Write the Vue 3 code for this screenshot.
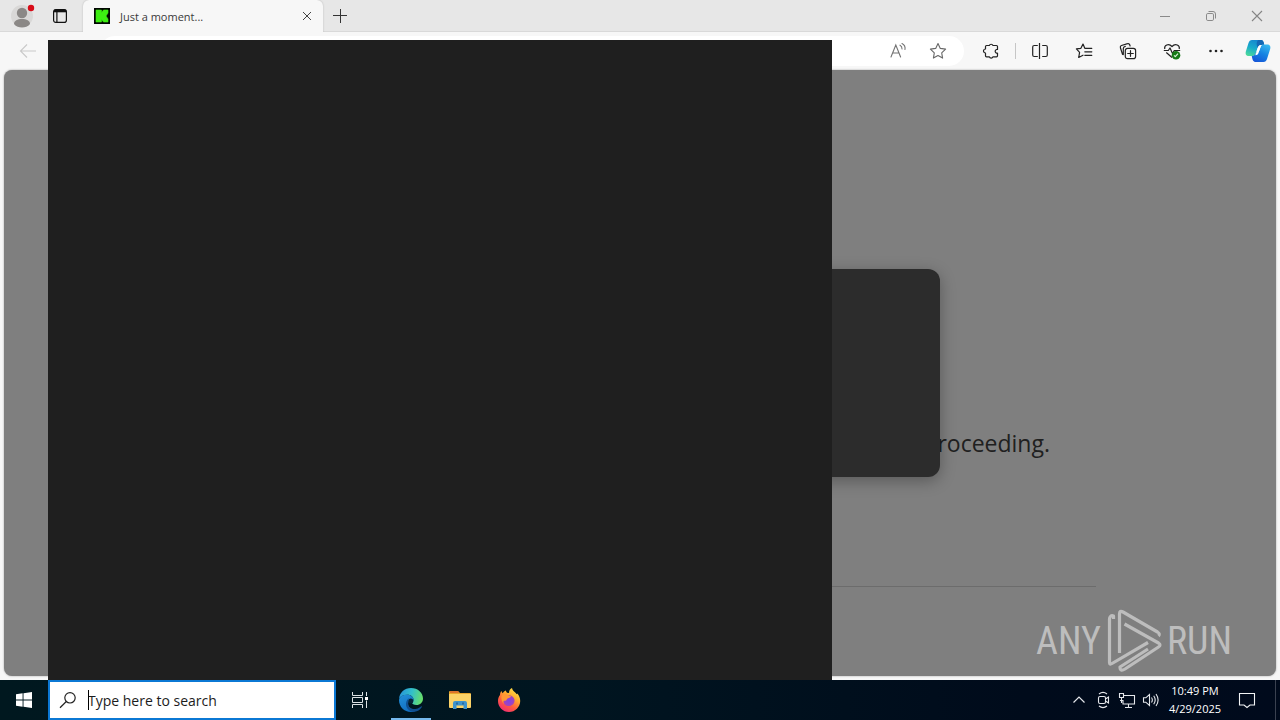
<script setup>
import { ref } from 'vue'

const address = ref('')
const query = ref('')
</script>

<template>
  <div class="desktop">
    <section class="browser">
      <header class="titlebar">
        <button class="profile" aria-label="Profile">
          <svg width="28" height="28" viewBox="0 0 28 28">
            <circle cx="14" cy="14" r="11" fill="#d9d8d7" />
            <circle cx="14" cy="11" r="5.2" fill="#8b8886" />
            <path d="M6 22c0-3.200 3.500-5 8-5s8 1.800 8 5c-2 2.600-5 3.400-8 3.400S8 24.600 6 22z" fill="#8b8886" />
            <circle cx="23" cy="6" r="3.200" fill="#d80c18" />
          </svg>
        </button>
        <button class="workspaces" aria-label="Tab actions">
          <svg width="16" height="16" viewBox="0 0 16 16" fill="none" stroke="#111">
            <rect x="1.600" y="1.600" width="12.800" height="12.800" rx="2.200" stroke-width="1.200" />
            <path d="M2 3.200h12M4.900 4v10" stroke-width="1.200" />
            <path d="M2 3h12" stroke-width="2.600" />
          </svg>
        </button>
        <div class="tab">
          <svg class="favicon" width="16" height="16" viewBox="0 0 16 16">
            <rect width="16" height="16" fill="#020702" />
            <path d="M2 2h5.500v2.500L9.500 2H14v3l-2 3 2 3v3H9.500l-2-2.500V14H2z" fill="#3dee12" stroke="#3dee12" stroke-width="0.600" stroke-linejoin="round" />
          </svg>
          <span class="tab-title">Just a moment...</span>
          <button class="tab-close" aria-label="Close tab">
            <svg width="10" height="10" viewBox="0 0 10 10" fill="none" stroke="#444"><path d="M1 1l8 8M9 1L1 9" /></svg>
          </button>
        </div>
        <button class="new-tab" aria-label="New tab">
          <svg width="14" height="14" viewBox="0 0 14 14" fill="none" stroke="#333"><path d="M7.500 0v14M0 6.500h14" /></svg>
        </button>
        <div class="window-controls">
          <button aria-label="Minimize">
            <svg width="12" height="12" viewBox="0 0 12 12" fill="none" stroke="#8a8a8a"><path d="M1 6.500h10" /></svg>
          </button>
          <button aria-label="Restore">
            <svg width="12" height="12" viewBox="0 0 12 12" fill="none" stroke="#8a8a8a"><rect x="1.500" y="3.500" width="7" height="7" rx="1.300" /><path d="M3.500 1.500H8a2.500 2.500 0 0 1 2.500 2.500v4.500" /></svg>
          </button>
          <button aria-label="Close">
            <svg width="12" height="12" viewBox="0 0 12 12" fill="none" stroke="#858585" stroke-width="1.100"><path d="M1 1l10 10M11 1L1 11" /></svg>
          </button>
        </div>
      </header>

      <nav class="toolbar">
        <button class="back" aria-label="Back">
          <svg width="18" height="16" viewBox="0 0 18 16" fill="none" stroke="#c9c9c9" stroke-width="1.100"><path d="M17 8H2M8 1.500L1.500 8 8 14.500" /></svg>
        </button>
        <div class="address">
          <input v-model="address" aria-label="Address" type="text">
          <button aria-label="Read aloud">
            <svg width="18" height="18" viewBox="0 0 18 18" fill="none" stroke="#737373" stroke-width="1.100" stroke-linecap="round"><path d="M2 15L6.800 3l4.800 12M3.700 11h6.200M11 3.200c1.500.8 2.100 2 2 3.700M13 1.500c2.500 1.200 3.400 3.300 3 6" /></svg>
          </button>
          <button aria-label="Add to favorites">
            <svg width="18" height="18" viewBox="0 0 18 18" fill="none" stroke="#686868" stroke-width="1.100" stroke-linejoin="round"><path d="M9 1.500l2.300 4.900 5.300.7-3.900 3.700.9 5.300L9 13.600l-4.600 2.500.9-5.300-3.900-3.700 5.300-.7z" /></svg>
          </button>
        </div>
        <button class="tool" aria-label="Extensions">
          <svg width="18" height="18" viewBox="0 0 18 18" fill="none" stroke="#222" stroke-width="1.200" stroke-linejoin="round"><path d="M4.500 3.500h2.800a2 2 0 0 1 3.700 0h3.500q1 0 1 1v3a1.900 1.900 0 1 0 0 3.700v2.600q0 1-1 1H11a2 2 0 0 1-3.700 0H4.500q-1 0-1-1V11a2 2 0 0 1 0-4V4.500q0-1 1-1z" /></svg>
        </button>
        <span class="divider"></span>
        <button class="tool" aria-label="Split screen">
          <svg width="18" height="18" viewBox="0 0 18 18" fill="none" stroke="#222" stroke-width="1.200"><path d="M6.800 3.500H3.200a1.500 1.500 0 0 0-1.500 1.500v8a1.500 1.500 0 0 0 1.500 1.500h3.600M11.200 3.500h3.600a1.500 1.500 0 0 1 1.500 1.500v8a1.500 1.500 0 0 1-1.500 1.500h-3.600M8.500 1v16" /></svg>
        </button>
        <button class="tool" aria-label="Favorites">
          <svg width="18" height="18" viewBox="0 0 18 18" fill="none" stroke="#222" stroke-width="1.200" stroke-linecap="round" stroke-linejoin="round"><path d="M11.200 6.300H9.800L8 2 5.900 6.300l-4.500.6 3.200 3.400-.9 5.200L8 13.200M11.500 6.300h5.300M9.800 9.800h7M9.800 13.300h7" /></svg>
        </button>
        <button class="tool" aria-label="Collections">
          <svg width="18" height="18" viewBox="0 0 18 18" fill="none" stroke="#222" stroke-width="1.200" stroke-linecap="round"><path d="M4.300 12.600l-.8-.3L1.400 5.700c-.3-1 .2-1.900 1.100-2.200L8.600 1.700c.9-.3 1.800.2 2.100 1.100l.4 1.200M4.300 12.600V6.500c0-1.200.9-2 2-2.200" /><rect x="6.300" y="6.300" width="10.300" height="10.300" rx="2.200" /><path d="M11.500 8.700v5.600M8.700 11.500h5.600" /></svg>
        </button>
        <button class="tool" aria-label="Browser essentials">
          <svg width="18" height="18" viewBox="0 0 18 18" fill="none" stroke="#222" stroke-width="1.200" stroke-linejoin="round"><path d="M1.800 7C.8 3.500 5.500.6 9 4.500c3.500-3.900 8.200-1 7.200 2.500M.8 8.500h4.500L7 6l2.500 5.500L11.300 8.500h5.900M3.300 10.500L9 15.500" /><circle cx="13" cy="13.200" r="4.300" fill="#157a16" stroke="none" /><path d="M11 13.300l1.300 1.300 2.700-2.900" stroke="#d9f0d9" /></svg>
        </button>
        <button class="tool" aria-label="Settings and more">
          <svg width="18" height="18" viewBox="0 0 18 18" fill="#222"><circle cx="3.500" cy="9" r="1.300" /><circle cx="9" cy="9" r="1.300" /><circle cx="14.500" cy="9" r="1.300" /></svg>
        </button>
        <button class="copilot" aria-label="Copilot">
          <svg width="26" height="24" viewBox="0 0 26 24">
            <defs>
              <linearGradient id="cpA" x1="0.600" y1="0" x2="0.200" y2="1"><stop offset="0" stop-color="#1586cf" /><stop offset="0.500" stop-color="#18aacb" /><stop offset="1" stop-color="#4cda9a" /></linearGradient>
              <linearGradient id="cpB" x1="0.800" y1="0" x2="0.300" y2="1"><stop offset="0" stop-color="#37b9ef" /><stop offset="0.500" stop-color="#1784e2" /><stop offset="1" stop-color="#1557d8" /></linearGradient>
            </defs>
            <path d="M7 1h9c2 0 2.700 1.500 3.200 4.500h-3c-2 0-2.800 1-3.400 3l-2 5.500c-.6 2-1.500 3-3.500 3H4c-3 0-4-2-3-5L3.500 4C4.200 2 5.200 1 7 1z" fill="url(#cpA)" />
            <path d="M13 1h3c2 0 2.700 1.500 3.200 5h-3c-2 0-2.800 1-3.400 3-1.500-3-1.600-5.500.2-8z" fill="#1468b4" />
            <path d="M18.500 23H11c-2.500 0-3.500-1.500-4.200-6 2 0 3.300-1 3.900-3l.6-1.800c.8 1.500 2.200 1.300 3-.7l1.500-4c.5-1.500 1.200-2 2.700-2H22c3 0 4 2 3 5l-3 9.500c-.7 2-1.700 3-3.500 3z" fill="url(#cpB)" />
            <path d="M16.800 6c-2.200-.2-3.200.5-4 2.800l-2.500 7.500c1.700-.2 2.600-.8 3.200-2.300l1.900-5.500c.3-1 .7-1.800 1.400-2.500z" fill="#fff" />
          </svg>
        </button>
      </nav>

      <main class="page">
        <div class="page-body">
          <p class="message">proceeding.</p>
          <hr class="rule">
        </div>
        <div class="dialog"></div>
        <div class="watermark">
          <span>ANY</span>
          <svg width="58" height="64" viewBox="0 0 58 64" fill="none" stroke="#bdbdbd" stroke-width="3.200" stroke-linejoin="round">
            <path d="M8.500 10V7C6 6 4.500 8 4.500 10v43.500q0 2.500 2.500 1L43 33.500" />
            <path d="M14.500 44V5q0-4 3.500-2l34.500 20q3 2 1 4" />
            <path d="M19.500 15l34 19q3 2 0 4L20 60q-5 3-5-2l28-18" />
          </svg>
          <span>RUN</span>
        </div>
      </main>
    </section>

    <aside class="search-panel" aria-label="Search results"></aside>

    <footer class="taskbar">
      <button class="start" aria-label="Start">
        <svg width="16" height="16" viewBox="0 0 16 16" fill="#fff"><path d="M0 2.300L6.600 1.300v6.200H0zM7.500 1.200L16 0v7.500H7.500zM0 8.400h6.600v6.300L0 13.700zM7.500 8.400H16V16l-8.500-1.200z" /></svg>
      </button>
      <label class="search">
        <svg width="18" height="18" viewBox="0 0 18 18" fill="none" stroke="#222" stroke-width="1.200"><circle cx="11" cy="6.800" r="5.200" /><path d="M7.300 10.500L1 16.700" /></svg>
        <input v-model="query" type="text" placeholder="Type here to search" aria-label="Type here to search">
        <span class="caret"></span>
      </label>
      <button class="app task-view" aria-label="Task view">
        <svg width="18" height="18" viewBox="0 0 18 18" fill="none" stroke="#dce3e6"><path d="M1.500 1v3.500h10V1M1.500 17v-3.500h10V17M1.500 6.500h10v5h-10zM15.500 1v4M15.500 9.500V17" /><path d="M14 6h3v3h-3z" fill="#fff" stroke="none" /></svg>
      </button>
      <button class="app active" aria-label="Microsoft Edge">
        <svg width="26" height="26" viewBox="0 0 26 26">
          <defs>
            <linearGradient id="edA" x1="0" y1="0.300" x2="1" y2="0.500"><stop offset="0" stop-color="#2793d8" /><stop offset="0.500" stop-color="#32bfcb" /><stop offset="1" stop-color="#68df69" /></linearGradient>
            <linearGradient id="edB" x1="0" y1="0" x2="0.500" y2="1"><stop offset="0" stop-color="#2390d8" /><stop offset="1" stop-color="#116ec1" /></linearGradient>
          </defs>
          <path d="M1 12C1.500 5.500 6.500 1 13 1c7 0 12 5 12 10.500 0 4-3 6.500-6.500 6.500-3 0-4.300-1.200-4.300-2 0-.8 1.300-1.200 1.300-3.300 0-2.800-2.500-5-6-5C5 7.700 2 9.500 1 12z" fill="url(#edA)" />
          <path d="M1 13C1.500 9.500 5 7.700 9 7.700c3.500 0 6.500 2 6.500 5 0 .7-.2 1.200-.4 1.600-1-2-4.600-1.600-5 1.700-.4 4 3 8 8.900 7.200-1.800 1.200-4 1.800-6 1.800-7 0-12-5.500-12-12z" fill="url(#edB)" />
          <path d="M10.100 16c-.3 4 3.500 7 8.500 5.800 1.800-.4 3.200-1.500 4.300-2.300.8-.5 1.200.1.800.8-1.500 2.700-4.500 4.200-7 4.500C11.500 25.200 7.500 21 8 16.500c.2-2.500 1.500-4.500 3-5.500-1 1.500-.9 3-.9 5z" fill="#104f91" />
          <circle cx="12.800" cy="14" r="2.500" fill="#06243a" />
        </svg>
      </button>
      <button class="app" aria-label="File Explorer">
        <svg width="24" height="22" viewBox="0 0 24 22">
          <path d="M1 3q0-1 1-1h8l2 2h10q1 0 1 1v4H1z" fill="#e8a62b" />
          <path d="M2 2h8l1 2H2z" fill="#dc742c" />
          <path d="M1 5h22v13q0 1-1 1H2q-1 0-1-1z" fill="#fbd267" />
          <path d="M5 20v-6q0-2 2-2h10q2 0 2 2v6h-3.500v-3.500h-7V20z" fill="#3d93cc" />
          <path d="M8 13.500h2v2H8zM14 13.500h2v2h-2z" fill="#286ba2" />
        </svg>
      </button>
      <button class="app" aria-label="Firefox">
        <svg width="26" height="26" viewBox="0 0 26 26">
          <defs>
            <linearGradient id="ffA" x1="0.800" y1="0" x2="0.200" y2="1"><stop offset="0" stop-color="#ffe64b" /><stop offset="0.350" stop-color="#ffab2e" /><stop offset="0.650" stop-color="#ff5b3e" /><stop offset="1" stop-color="#ee2878" /></linearGradient>
            <radialGradient id="ffB"><stop offset="0" stop-color="#7f42e4" /><stop offset="1" stop-color="#a644b8" /></radialGradient>
          </defs>
          <path d="M4 8c0-1.500.6-3 1.500-4 .2 1 .7 1.700 1.200 2.200C8 4.500 9 3.800 10 3.500c-.1 1 .3 1.700 1 2.200l2 .3C13 3.500 14.200 1.800 16 1c.3 2.500 2 3.300 3.500 4.800.5.5.8 1 1 1.500l.7-.8c2 2 3 4.600 3 7.500 0 6-5 11-11.200 11S2 20 2 14c0-2.300.7-4.500 2-6z" fill="url(#ffA)" />
          <path d="M9.500 9c3-2 8.500-.5 9 4 .3 3.500-2.500 6-5.500 6-4 0-6-3-5.500-6z" fill="url(#ffB)" />
          <path d="M6 8c2-1.500 4.500-1.200 6 0 1 .6 2 .8 3 1-.3 2-2.500 1.700-3.500 2.500-1.200 1-.8 2.500-2.500 2.300-1.500-.2-2.500 1-1 3.200-2-1.300-3.500-5.500-2-9z" fill="#ff9834" />
        </svg>
      </button>

      <div class="tray">
        <button aria-label="Show hidden icons">
          <svg width="18" height="18" viewBox="0 0 18 18" fill="none" stroke="#e5e8ec" stroke-width="1.200"><path d="M3.500 11.500L9 6l5.500 5.500" /></svg>
        </button>
        <button aria-label="Meet Now">
          <svg width="18" height="18" viewBox="0 0 18 18" fill="none" stroke="#e5e8ec" stroke-width="1.100"><rect x="4.500" y="5.500" width="7" height="7" rx="1.500" /><path d="M11.500 8l3-2v6l-3-2M5 3c2.300-1.800 5.700-1.800 8 0M5 15c2.300 1.800 5.700 1.800 8 0" /></svg>
        </button>
        <button aria-label="Network">
          <svg width="18" height="18" viewBox="0 0 18 18" fill="none" stroke="#e5e8ec" stroke-width="1.100"><path d="M6 4.500h10.500v8.500H5V9M10.500 13v3M7 16.500h7M1.500 2.500h4v4h-4zM3.500 6.500V12M2 9.500h3" /></svg>
        </button>
        <button aria-label="Volume">
          <svg width="18" height="18" viewBox="0 0 18 18" fill="none" stroke="#e5e8ec" stroke-width="1.100"><path d="M1.500 6.800h2.300L7.500 3.500v11l-3.700-3.300H1.500zM9.500 6.500q1.700 2.500 0 5M11.700 4.700q3 4.300 0 8.600M14 3q4.200 6 0 12" /></svg>
        </button>
        <time class="clock" datetime="2025-04-29T22:49">
          <span>10:49 PM</span>
          <span>4/29/2025</span>
        </time>
        <button class="notifications" aria-label="Notifications">
          <svg width="18" height="18" viewBox="0 0 18 18" fill="none" stroke="#f2f4f6" stroke-width="1.100"><path d="M1.500 2.500h15v11.500h-4.500L9 16.500 6 14H1.500z" /></svg>
        </button>
      </div>
    </footer>
  </div>
</template>

<style>
html,
body {
  margin: 0;
}
</style>

<style scoped>
.desktop {
  position: relative;
  display: flex;
  flex-direction: column;
  min-height: 100vh;
  overflow: hidden;
  font-family: "Open Sans", "Noto Sans", sans-serif;
}

.desktop *,
.desktop *::before {
  box-sizing: border-box;
}

button {
  display: flex;
  align-items: center;
  justify-content: center;
  flex: none;
  margin: 0;
  padding: 0;
  border: 0;
  background: none;
}

svg {
  display: block;
  flex: none;
}

input {
  min-width: 0;
  flex: 1;
  padding: 0;
  border: 0;
  outline: 0;
  background: transparent;
  font: inherit;
}

.browser {
  display: flex;
  flex: 1;
  flex-direction: column;
  background: #f7f7f7;
}

.titlebar {
  display: flex;
  height: 32px;
  background: #e7e7e7;
  box-shadow: inset 0 -1px #d9d9d9;
}

.profile {
  width: 44px;
}

.workspaces {
  width: 32px;
}

.tab {
  display: flex;
  align-items: center;
  width: 240px;
  margin-left: 7px;
  padding: 0 11px;
  border-radius: 6px 6px 0 0;
  background: #f7f7f7;
  box-shadow: 0 0 2px #b5b5b5;
  clip-path: inset(0 -3px);
}

.tab-title {
  flex: 1;
  margin-left: 10px;
  color: #3a3a3a;
  font-size: 11px;
}

.new-tab {
  width: 34px;
}

.window-controls {
  display: flex;
  margin-left: auto;
}

.window-controls button {
  width: 46px;
}

.toolbar {
  display: flex;
  align-items: center;
  height: 38px;
  padding-right: 2px;
}

.back {
  width: 56px;
}

.address {
  display: flex;
  flex: 1;
  align-items: center;
  height: 30px;
  margin: 0 5px 0 44px;
  padding: 0 6px 0 16px;
  border-radius: 15px;
  background: #fff;
}

.address button,
.copilot {
  width: 40px;
}

.tool {
  width: 44px;
}

.divider {
  width: 1px;
  height: 16px;
  margin: 0 2px;
  background: #c6c6c6;
}

.page {
  position: relative;
  display: grid;
  flex: 1;
  margin: 0 4px 4px;
  border-radius: 8px;
  background: #7f7f7f;
  box-shadow: 0 0 2px #999;
}

.page-body {
  grid-area: 1 / 1;
  width: 100%;
  max-width: 912px;
  margin: 0 auto;
  padding-top: 357px;
}

.message {
  margin: 0;
  padding-right: 46px;
  color: #202020;
  font-size: 23px;
  line-height: 32px;
  text-align: right;
}

.rule {
  margin: 127px 0 0;
  border: 0;
  border-top: 1px solid #6c6c6c;
}

.dialog {
  z-index: 1;
  grid-area: 1 / 1;
  place-self: center;
  width: 600px;
  height: 208px;
  border-radius: 12px;
  background: #2c2c2c;
  box-shadow: 0 4px 16px rgba(0, 0, 0, 0.3);
}

.watermark {
  position: absolute;
  right: 44px;
  bottom: 3px;
  display: flex;
  align-items: center;
  gap: 4px;
  color: #bdbdbd;
  font-family: "Liberation Sans Narrow", "Roboto Condensed", "DejaVu Sans Condensed", sans-serif;
  font-size: 38px;
  line-height: 64px;
}

.search-panel {
  position: absolute;
  z-index: 2;
  top: 40px;
  bottom: 40px;
  left: 48px;
  width: 784px;
  background: #1f1f1f;
}

.taskbar {
  display: flex;
  height: 40px;
  background: linear-gradient(90deg, #00181f, #001520 45%, #000b1b 80%, #000a1c);
}

.start {
  width: 48px;
}

.search {
  position: relative;
  display: flex;
  align-items: center;
  width: 288px;
  padding: 0 9px;
  border: 2px solid #0b78d4;
  background: #fff;
  font-size: 14px;
}

.search input {
  margin-left: 11px;
}

.search input::placeholder {
  color: #1c1c1c;
  opacity: 1;
}

.caret {
  position: absolute;
  top: 8px;
  left: 38px;
  width: 1px;
  height: 20px;
  background: #000;
}

.app {
  position: relative;
  width: 49px;
}

.task-view {
  width: 48px;
  margin-right: 2px;
}

.active::before {
  position: absolute;
  right: 4px;
  bottom: 0;
  left: 5px;
  height: 2px;
  background: #76b9ed;
  content: "";
}

.tray {
  display: flex;
  margin-left: auto;
  padding-right: 4px;
}

.tray::after {
  width: 1px;
  background: #3a4150;
  content: "";
}

.tray button {
  width: 24px;
}

.clock {
  display: flex;
  flex-direction: column;
  justify-content: center;
  width: 64px;
  color: #fff;
  font-size: 11px;
  line-height: 18px;
  text-align: center;
}

.tray .notifications {
  width: 40px;
  margin-right: 8px;
}
</style>
